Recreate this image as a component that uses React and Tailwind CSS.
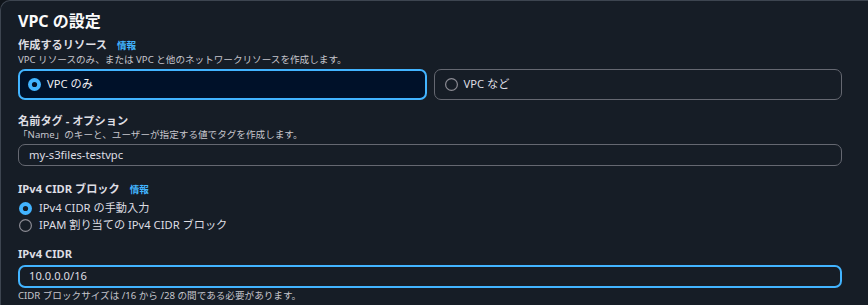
import React from "react";

const font = { fontFamily: '"Noto Sans", "Noto Sans CJK JP", sans-serif' };

function RadioOn({ inner = "#0f141a" }) {
  return (
    <svg width="13" height="13" viewBox="0 0 13 13" className="shrink-0">
      <circle cx="6.5" cy="6.5" r="6.5" fill="#42b4ff" />
      <circle cx="6.5" cy="6.5" r="2.6" fill={inner} />
    </svg>
  );
}

function RadioOff() {
  return (
    <svg width="13" height="13" viewBox="0 0 13 13" className="shrink-0">
      <circle cx="6.5" cy="6.5" r="5.9" fill="none" stroke="#8c8c94" strokeWidth="1.2" />
    </svg>
  );
}

export default function App() {
  return (
    <div className="w-[868px] h-[305px] overflow-hidden bg-[#0f141a]" style={font}>
      <div className="w-[868px] h-[305px] bg-[#161d26] border-t border-l border-[#3d4550] rounded-tl-[10px] pl-[17px] pt-[10px]">
        <div className="w-[824px] flex flex-col">
          <h2 className="text-[16px] leading-[20px] font-bold text-[#fbfbfb]">VPC の設定</h2>

          <div className="mt-[7px] text-[11.2px] leading-[14px] font-bold text-[#dedee3]">
            作成するリソース
            <span className="ml-[10px] text-[9.6px] text-[#42b4ff]">情報</span>
          </div>
          <div className="text-[9.6px] leading-[13px] text-[#c6c6cd]">
            VPC リソースのみ、または VPC と他のネットワークリソースを作成します。
          </div>

          <div className="mt-[3px] grid grid-cols-2 gap-[7px]">
            <div className="h-[31px] rounded-[7px] border-2 border-[#42b4ff] bg-[#001129] pl-[8px] flex items-center gap-[6px]">
              <RadioOn inner="#001129" />
              <span className="text-[11.2px] text-[#f0f0f3]">VPC のみ</span>
            </div>
            <div className="h-[31px] rounded-[7px] border border-[#656871] pl-[10px] flex items-center gap-[6px]">
              <RadioOff />
              <span className="text-[11.2px] text-[#dedee3]">VPC など</span>
            </div>
          </div>

          <div className="mt-[14px] text-[11.2px] leading-[14px] font-bold text-[#dedee3]">
            名前タグ - オプション
          </div>
          <div className="text-[9.6px] leading-[13px] text-[#c6c6cd]">
            「Name」のキーと、ユーザーが指定する値でタグを作成します。
          </div>
          <div className="mt-[3px] h-[22px] rounded-[7px] border border-[#656871] pl-[10px] flex items-center text-[11.2px] text-[#dedee3]">
            my-s3files-testvpc
          </div>

          <div className="mt-[16px] text-[11.2px] leading-[14px] font-bold text-[#dedee3]">
            IPv4 CIDR ブロック
            <span className="ml-[10px] text-[9.6px] text-[#42b4ff]">情報</span>
          </div>
          <div className="mt-[3px] flex flex-col">
            <div className="h-[17px] flex items-center gap-[7px] pl-px">
              <RadioOn inner="#161d26" />
              <span className="text-[11.2px] text-[#dedee3]">IPv4 CIDR の手動入力</span>
            </div>
            <div className="h-[17px] flex items-center gap-[7px] pl-px">
              <RadioOff />
              <span className="text-[11.2px] text-[#dedee3]">IPAM 割り当ての IPv4 CIDR ブロック</span>
            </div>
          </div>

          <div className="mt-[13px] text-[11.2px] leading-[14px] font-bold text-[#dedee3]">IPv4 CIDR</div>
          <div className="mt-[4px] h-[23px] rounded-[7px] border-2 border-[#42b4ff] pl-[9px] flex items-center text-[11.2px] text-[#dedee3]">
            10.0.0.0/16
          </div>
          <div className="mt-[1px] text-[9.6px] leading-[13px] text-[#c6c6cd]">
            CIDR ブロックサイズは /16 から /28 の間である必要があります。
          </div>
        </div>
      </div>
    </div>
  );
}
